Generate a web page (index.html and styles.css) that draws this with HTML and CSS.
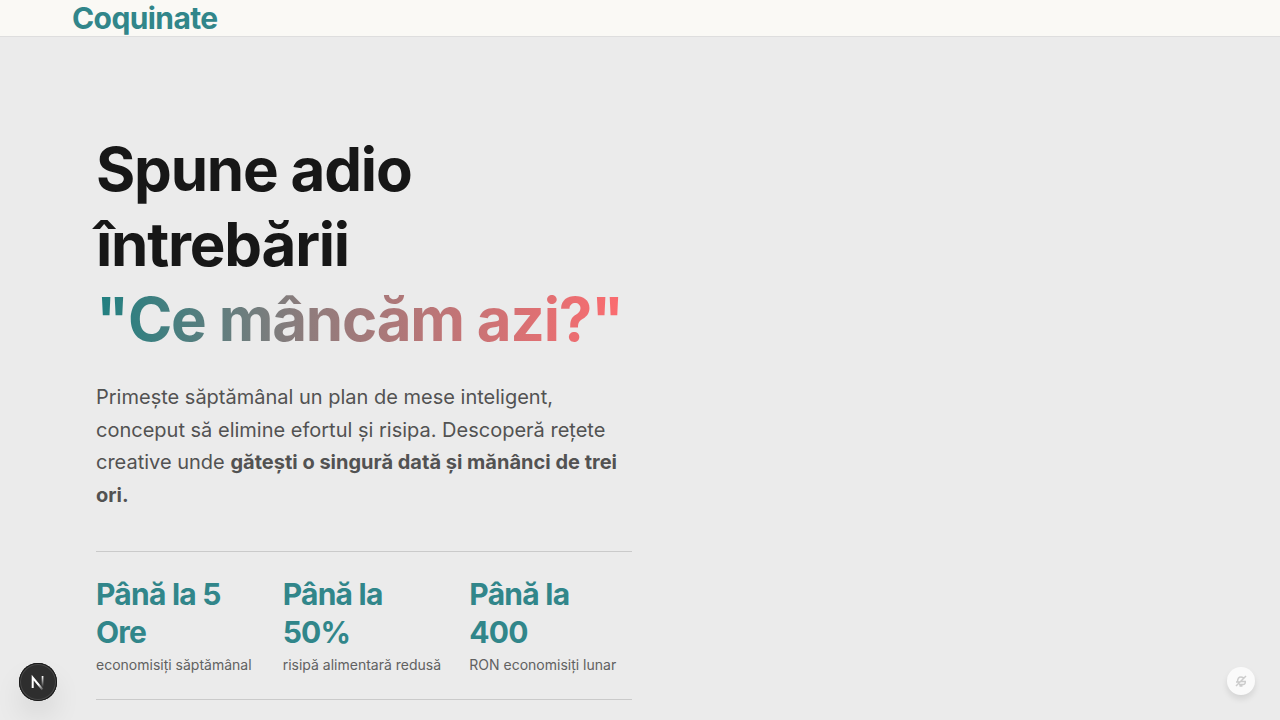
FILE: index.html
```html
<!DOCTYPE html>
<html lang="ro">
<head>
<meta charset="utf-8">
<title>Coquinate</title>
<link rel="stylesheet" href="styles.css">
</head>
<body>
<header class="site-header">
  <div class="container"><span class="brand">Coquinate</span></div>
</header>
<main class="container hero">
  <section class="intro">
    <h1 class="title">Spune adio întrebării <span class="accent">"Ce mâncăm azi?"</span></h1>
    <p class="lead">Primește săptămânal un plan de mese inteligent, conceput să elimine efortul și risipa. Descoperă rețete creative unde <strong>gătești o singură dată și mănânci de trei ori.</strong></p>
    <div class="stats">
      <div><div class="value">Până la 5 Ore</div><div class="label">economisiți săptămânal</div></div>
      <div><div class="value">Până la 50%</div><div class="label">risipă alimentară redusă</div></div>
      <div><div class="value">Până la 400</div><div class="label">RON economisiți lunar</div></div>
    </div>
  </section>
</main>
<button class="dev-button" type="button" aria-label="Open dev tools">
  <svg width="38" height="38" viewBox="0 0 38 38" fill="none">
    <defs>
      <linearGradient id="diag" x1="20" y1="21" x2="25" y2="27" gradientUnits="userSpaceOnUse"><stop stop-color="#fff"/><stop offset="1" stop-color="#fff" stop-opacity="0"/></linearGradient>
      <linearGradient id="stem" x1="0" y1="13" x2="0" y2="24" gradientUnits="userSpaceOnUse"><stop stop-color="#fff"/><stop offset="1" stop-color="#fff" stop-opacity="0"/></linearGradient>
    </defs>
    <path d="M13.700 25V14.500L23.500 26.500" stroke="url(#diag)" stroke-width="2"/>
    <path d="M23.500 13V24H23.600V13" stroke="url(#stem)" stroke-width="1.600"/>
  </svg>
</button>
<button class="motion-button" type="button" aria-label="Notificări oprite">
  <svg width="12" height="12" viewBox="0 0 24 24" fill="none" stroke="currentColor" stroke-width="3"><path d="M2 22 22 2M2 14h8M5 14c0-4 1-10 7-10 3 0 5 2 6 4M12 13h10M20 13c1 3 0 6-3 6H8M9 22h6"/></svg>
</button>
</body>
</html>
```
FILE: styles.css
```css
* { box-sizing: border-box; }
body { margin: 0; min-height: 100vh; background: #ebebeb; color: #171717; font-family: Inter, sans-serif; }
.site-header { background: #faf9f5; border-bottom: 1px solid #dedede; }
.container { max-width: 1200px; margin: 0 auto; padding: 0 32px; }
.brand { display: block; font-size: 30px; line-height: 36px; font-weight: 700; color: #31868a; letter-spacing: -0.02em; }
.hero { display: grid; grid-template-columns: 1fr 1fr; gap: 16px; padding: 95px 56px 20px; }
.title { margin: 0; font-size: 60px; line-height: 75px; font-weight: 700; letter-spacing: -0.02em; }
.accent { display: block; background: linear-gradient(to right, #1f8081, #907c7c 40%, #ff6b6f); background-clip: text; -webkit-background-clip: text; color: transparent; }
.lead { margin: 24px 0 0; font-size: 20px; line-height: 1.625; color: #525252; }
.stats { display: grid; grid-template-columns: repeat(3, 1fr); gap: 24px; margin-top: 40px; padding: 24px 0; border: solid #cacaca; border-width: 1px 0; }
.value { font-size: 30px; line-height: 1.25; font-weight: 700; color: #31868a; letter-spacing: -0.025em; }
.label { font-size: 14px; line-height: 20px; color: #616161; margin-top: 4px; }
.dev-button { position: fixed; left: 19px; bottom: 19px; width: 38px; height: 38px; border-radius: 50%; border: 0; padding: 0; background: #2e2e2e; box-shadow: inset 0 0 0 1px #171717, inset 0 0 0 2px #484848, 0 16px 32px -8px rgba(0,0,0,.24); }
.motion-button { position: fixed; right: 25px; bottom: 25px; width: 28px; height: 28px; border-radius: 50%; border: 0; padding: 8px; background: #fafafa; color: #ccc; box-shadow: 0 4px 6px rgba(0,0,0,.1); }
.motion-button svg, .dev-button svg { display: block; }
```
